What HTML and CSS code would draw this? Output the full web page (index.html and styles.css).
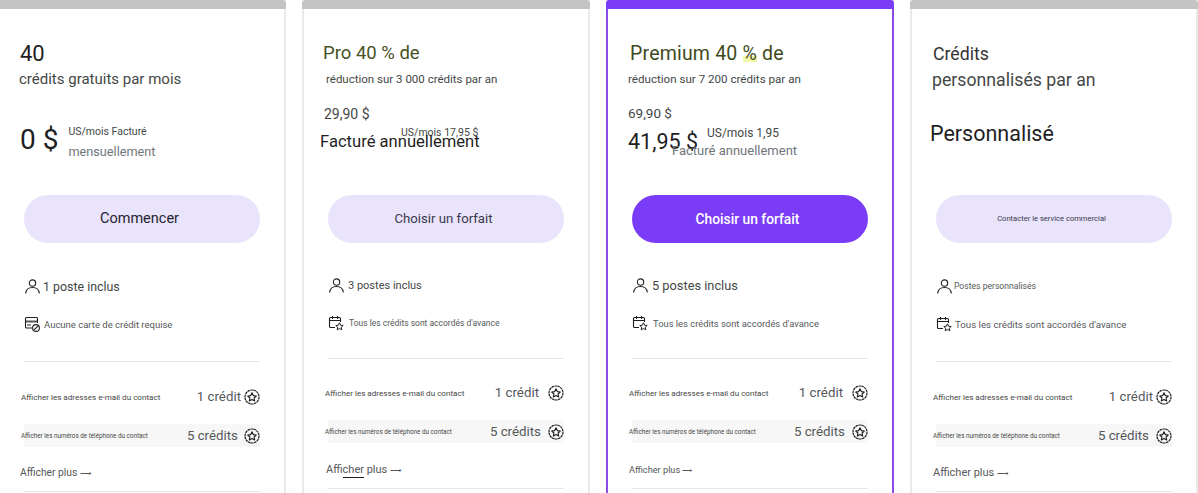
FILE: index.html
```html
<!DOCTYPE html>
<html lang="fr">

<head>
    <meta charset="utf-8">
    <title>Forfaits</title>
    <link rel="stylesheet" href="styles.css">
</head>

<body>
    <svg class="defs" width="0" height="0">
        <symbol id="i-person" viewBox="-1 -.5 16 16">
            <circle cx="7.500" cy="4.600" r="3.200" fill="none" stroke="currentColor" stroke-width="1.100" />
            <path d="M.7 15c.3-3.800 3.200-6 6.800-6s6.500 2.200 6.800 6" fill="none" stroke="currentColor" stroke-width="1.100" />
        </symbol>
        <symbol id="i-card" viewBox="0 0 16 16">
            <path d="M8 12H2.500a1 1 0 0 1-1-1V2.500a1 1 0 0 1 1-1h10a1 1 0 0 1 1 1V7" fill="none" stroke="currentColor" stroke-width="1.100" />
            <path d="M1.500 4.500h12v2h-12z" fill="currentColor" opacity=".75" />
            <path d="M3 9h4" stroke="currentColor" stroke-width="1" />
            <circle cx="12" cy="12" r="3.400" fill="#fff" stroke="currentColor" stroke-width="1.100" />
            <path d="M9.800 14.200l4.400-4.400" stroke="currentColor" stroke-width="1.100" />
        </symbol>
        <symbol id="i-cal" viewBox="0 0 16 16">
            <path d="M7 12.500H2.500a1 1 0 0 1-1-1v-8a1 1 0 0 1 1-1h9a1 1 0 0 1 1 1V7" fill="none" stroke="currentColor" stroke-width="1.100" />
            <path d="M1.500 5.500h11M4.500 1v3M9.500 1v3" fill="none" stroke="currentColor" stroke-width="1.100" />
            <path d="M11.500 7.800l1.100 2.400 2.600.3-1.900 1.700.5 2.600-2.300-1.300-2.300 1.300.5-2.600-1.900-1.700 2.600-.3z" fill="#fff" stroke="currentColor" stroke-width="1" stroke-linejoin="round" />
        </symbol>
        <symbol id="i-credit" viewBox="0 0 16 16">
            <circle cx="8" cy="8" r="7" fill="none" stroke="currentColor" stroke-width="1.200" stroke-dasharray="2.600 .5" />
            <path d="M8 3.800l1.300 2.800 3 .4-2.200 2 .6 3L8 10.500 5.300 12l.6-3-2.200-2 3-.4z" fill="none" stroke="currentColor" stroke-width="1.100" stroke-linejoin="round" />
        </symbol>
    </svg>

    <div class="plans">
        <div class="card">
            <div class="bar"></div>
            <div class="card-body">
                <div class="head">
                    <div class="free-count">40</div>
                    <div class="free-sub">crédits gratuits par mois</div>
                    <div class="free-price">
                        <div class="free-amount">0 $</div>
                        <div>
                            <div class="free-unit">US/mois Facturé</div>
                            <div class="free-bill">mensuellement</div>
                        </div>
                    </div>
                </div>
                <button class="btn btn-start">Commencer</button>
                <div class="feats">
                    <div class="feat"><svg class="icon"><use href="#i-person" /></svg><span class="t-seat1">1 poste inclus</span></div>
                    <div class="feat"><svg class="icon"><use href="#i-card" /></svg><span class="t-note1 grey">Aucune carte de crédit requise</span></div>
                </div>
                <div class="rule"></div>
                <div class="credit-row">
                    <span class="lbl">Afficher les adresses e-mail du contact</span>
                    <span class="cost gap3">1 crédit</span><svg class="icon star"><use href="#i-credit" /></svg>
                </div>
                <div class="credit-row shaded">
                    <span class="lbl small">Afficher les numéros de téléphone du contact</span>
                    <span class="cost gap6">5 crédits</span><svg class="icon star"><use href="#i-credit" /></svg>
                </div>
                <div class="more more-free">Afficher plus <span class="arrow">⟶</span></div>
                <div class="rule rule-end"></div>
            </div>
        </div>

        <div class="card card-short">
            <div class="bar"></div>
            <div class="card-body">
                <div class="head">
                    <div class="pro-name">Pro 40 % de</div>
                    <div class="pro-sub">réduction sur 3 000 crédits par an</div>
                    <div class="pro-old">29,90 $</div>
                    <div class="pro-unit">US/mois 17,95 $</div>
                    <div class="pro-bill">Facturé annuellement</div>
                </div>
                <button class="btn">Choisir un forfait</button>
                <div class="feats">
                    <div class="feat"><svg class="icon"><use href="#i-person" /></svg><span class="t-seat2">3 postes inclus</span></div>
                    <div class="feat"><svg class="icon"><use href="#i-cal" /></svg><span class="t-note2 grey">Tous les crédits sont accordés d'avance</span></div>
                </div>
                <div class="rule"></div>
                <div class="credit-row">
                    <span class="lbl">Afficher les adresses e-mail du contact</span>
                    <span class="cost gap9">1 crédit</span><svg class="icon star"><use href="#i-credit" /></svg>
                </div>
                <div class="credit-row shaded">
                    <span class="lbl small">Afficher les numéros de téléphone du contact</span>
                    <span class="cost gap7">5 crédits</span><svg class="icon star"><use href="#i-credit" /></svg>
                </div>
                <div class="more more-pro">Af<span class="ink">ficher</span> plus <span class="arrow">⟶</span></div>
                <div class="rule rule-end"></div>
            </div>
        </div>

        <div class="card card-short card-top">
            <div class="bar"></div>
            <div class="card-body">
                <div class="head">
                    <div class="prem-name">Premium 40 <span class="mark">%</span> de</div>
                    <div class="prem-sub">réduction sur 7 200 crédits par an</div>
                    <div class="prem-old">69,90 $</div>
                    <div class="prem-price">
                        <div class="prem-amount">41,95 $</div>
                        <div class="prem-unit">US/mois 1,95</div>
                    </div>
                    <div class="prem-bill">Facturé annuellement</div>
                </div>
                <button class="btn btn-main">Choisir un forfait</button>
                <div class="feats">
                    <div class="feat"><svg class="icon"><use href="#i-person" /></svg><span class="t-seat3">5 postes inclus</span></div>
                    <div class="feat"><svg class="icon"><use href="#i-cal" /></svg><span class="t-note3 grey">Tous les crédits sont accordés d'avance</span></div>
                </div>
                <div class="rule"></div>
                <div class="credit-row">
                    <span class="lbl">Afficher les adresses e-mail du contact</span>
                    <span class="cost gap9">1 crédit</span><svg class="icon star"><use href="#i-credit" /></svg>
                </div>
                <div class="credit-row shaded">
                    <span class="lbl small">Afficher les numéros de téléphone du contact</span>
                    <span class="cost gap7">5 crédits</span><svg class="icon star"><use href="#i-credit" /></svg>
                </div>
                <div class="more more-prem">Afficher plus <span class="arrow">⟶</span></div>
                <div class="rule rule-end"></div>
            </div>
        </div>

        <div class="card">
            <div class="bar"></div>
            <div class="card-body">
                <div class="head">
                    <div class="cust-name">Crédits</div>
                    <div class="cust-sub">personnalisés par an</div>
                    <div class="cust-price">Personnalisé</div>
                </div>
                <button class="btn btn-tiny">Contacter le service commercial</button>
                <div class="feats">
                    <div class="feat"><svg class="icon"><use href="#i-person" /></svg><span class="t-seat4 grey">Postes personnalisés</span></div>
                    <div class="feat"><svg class="icon"><use href="#i-cal" /></svg><span class="t-note4 grey">Tous les crédits sont accordés d'avance</span></div>
                </div>
                <div class="rule"></div>
                <div class="credit-row">
                    <span class="lbl">Afficher les adresses e-mail du contact</span>
                    <span class="cost gap3">1 crédit</span><svg class="icon star"><use href="#i-credit" /></svg>
                </div>
                <div class="credit-row shaded">
                    <span class="lbl small">Afficher les numéros de téléphone du contact</span>
                    <span class="cost gap7">5 crédits</span><svg class="icon star"><use href="#i-credit" /></svg>
                </div>
                <div class="more more-cust">Afficher plus <span class="arrow">⟶</span></div>
                <div class="rule rule-end"></div>
            </div>
        </div>
    </div>
</body>

</html>
```

FILE: styles.css
```css
html, body {
    margin: 0;
    height: 493px;
    overflow: hidden;
    background-color: #fff;
}

body {
    font-family: Roboto, "Liberation Sans", sans-serif;
    color: #444746;
}

.defs {
    position: absolute;
}

.plans {
    display: flex;
    gap: 16px;
    margin-left: -2px;
    width: 1200px;
    height: 493px;
    overflow: hidden;
}

/* cards */

.card {
    width: 288px;
    flex: none;
}

.bar {
    height: 9px;
    background-color: #c4c4c4;
    border-radius: 3px 3px 0 0;
}

.card-body {
    height: 484px;
    padding: 0 24px;
    border: 2px solid #e9e9e9;
    border-width: 0 2px;
}

.card-top .bar {
    background-color: #7a3cf6;
}

.card-top .card-body {
    border-color: #8b4be6;
}

.head {
    display: flow-root;
    height: 186px;
}

/* free plan */

.free-count {
    margin: 33px 0 0 -4px;
    font-size: 22px;
    line-height: 24px;
    color: #1f1f1f;
}

.free-sub {
    margin: 3px 0 0 -5px;
    font-size: 15px;
    line-height: 20px;
}

.free-price {
    display: flex;
    gap: 10px;
    margin: 35px 0 0 -4px;
}

.free-amount {
    margin-top: -1px;
    font-size: 28px;
    line-height: 34px;
    color: #1f1f1f;
}

.free-unit {
    font-size: 10.500px;
    line-height: 16px;
}

.free-bill {
    margin-top: 2px;
    font-size: 12.700px;
    line-height: 20px;
    color: #70757a;
}

/* pro plan */

.pro-name {
    margin: 32px 0 0 -5px;
    font-size: 18.500px;
    line-height: 24px;
    color: #47521f;
}

.pro-sub {
    margin: 6px 0 0 -2px;
    font-size: 11.500px;
    line-height: 16px;
}

.pro-old {
    margin: 17px 0 0 -4px;
    font-size: 14px;
    line-height: 20px;
}

.pro-unit {
    margin: 2px 0 0 73px;
    font-size: 10.500px;
    line-height: 14px;
}

.pro-bill {
    margin: -8px 0 0 -8px;
    font-size: 16.600px;
    line-height: 20px;
    color: #1f1f1f;
}

/* premium plan */

.prem-name {
    margin: 33px 0 0 -2px;
    font-size: 19.500px;
    line-height: 24px;
    letter-spacing: .2px;
    color: #3f4a1c;
}

.mark {
    background: linear-gradient(transparent 62%, #f1f7a8 62%, #f1f7a8 88%, transparent 88%);
}

.prem-sub {
    margin: 4px 0 0 -4px;
    font-size: 11.600px;
    line-height: 18px;
}

.prem-old {
    margin: 15px 0 0 -4px;
    font-size: 13.500px;
    line-height: 20px;
}

.prem-price {
    display: flex;
    gap: 9px;
    margin: 2px 0 0 -4px;
}

.prem-amount {
    margin-top: 2px;
    font-size: 21.500px;
    line-height: 30px;
    color: #1f1f1f;
}

.prem-unit {
    margin-top: -1px;
    font-size: 12px;
    line-height: 18px;
}

.prem-bill {
    margin: -15px 0 0 40px;
    font-size: 13px;
    line-height: 18px;
    color: #70757a;
}

/* custom plan */

.cust-name {
    margin: 33px 0 0 -3px;
    font-size: 17.700px;
    line-height: 24px;
    color: #333;
}

.cust-sub {
    margin: 2px 0 0 -4px;
    font-size: 17.700px;
    line-height: 24px;
    color: #444746;
}

.cust-price {
    margin: 27px 0 0 -6px;
    font-size: 21.500px;
    line-height: 30px;
    color: #1f1f1f;
}

/* buttons */

.btn {
    display: block;
    width: 236px;
    height: 48px;
    border: 0;
    border-radius: 24px;
    padding: 0 5px 2px 0;
    background-color: #e9e3fc;
    font-family: inherit;
    font-size: 13.200px;
    color: #3a3a4a;
}

.btn-start {
    font-size: 14.500px;
    color: #24242e;
}

.btn-main {
    padding-bottom: 0;
    background-color: #7a3cf6;
    font-size: 13.800px;
    font-weight: 500;
    color: #fff;
}

.btn-tiny {
    font-size: 7.600px;
}

/* included features */

.feats {
    display: flex;
    flex-direction: column;
    gap: 18px;
    margin-top: 33px;
}

.card-short .feats {
    margin-top: 32px;
}

.feat {
    display: flex;
    align-items: center;
    height: 20px;
}

.icon {
    width: 16px;
    height: 16px;
    flex: none;
    color: #1f1f1f;
}

.feat .icon {
    margin-right: 4px;
}

.t-seat1 { font-size: 12.400px; margin-left: -1px; }
.t-seat2 { font-size: 11px; }
.t-seat3 { font-size: 12.800px; }
.t-seat4 { font-size: 8.600px; margin-left: -2px; }
.t-note1 { font-size: 9.500px; }
.t-note2 { font-size: 8.500px; margin-left: 1px; }
.t-note3 { font-size: 9.400px; margin-left: 1px; }
.t-note4 { font-size: 9.700px; margin-left: -1px; }
.grey { color: #55585a; }

/* credit rows */

.rule {
    height: 1px;
    margin-top: 27px;
    background-color: #e6e6e6;
}

.card-short .rule {
    margin-top: 25px;
}

.card-short .rule-end,
.rule-end {
    margin-top: 10px;
}

.credit-row {
    display: flex;
    align-items: center;
    height: 23px;
    margin-top: 23px;
}

.card-short .credit-row {
    margin-top: 22px;
}

.credit-row.shaded,
.card-short .credit-row.shaded {
    margin-top: 16px;
    background-color: #f7f7f7;
}

.lbl {
    margin-left: -3px;
    margin-right: auto;
    font-size: 8.100px;
}

.lbl.small {
    font-size: 6.300px;
}

.cost {
    font-size: 13.300px;
    color: #55585a;
}

.gap3 { margin-right: 3px; }
.gap6 { margin-right: 6px; }
.gap7 { margin-right: 7px; }
.gap9 { margin-right: 9px; }

.more {
    height: 16px;
    margin-top: 18px;
    font-size: 11px;
    line-height: 16px;
    color: #55585a;
}

.card-short .more {
    margin-top: 19px;
}

.more-free { margin-left: -4px; font-size: 10.300px; }
.more-pro { margin-left: -2px; }
.more-prem { margin-left: -3px; font-size: 9.200px; }
.more-cust { margin-left: -3px; }

.arrow {
    font-size: .75em;
}

.ink {
    padding-bottom: 1px;
    border-bottom: 1px solid #1f1f1f;
}
```
